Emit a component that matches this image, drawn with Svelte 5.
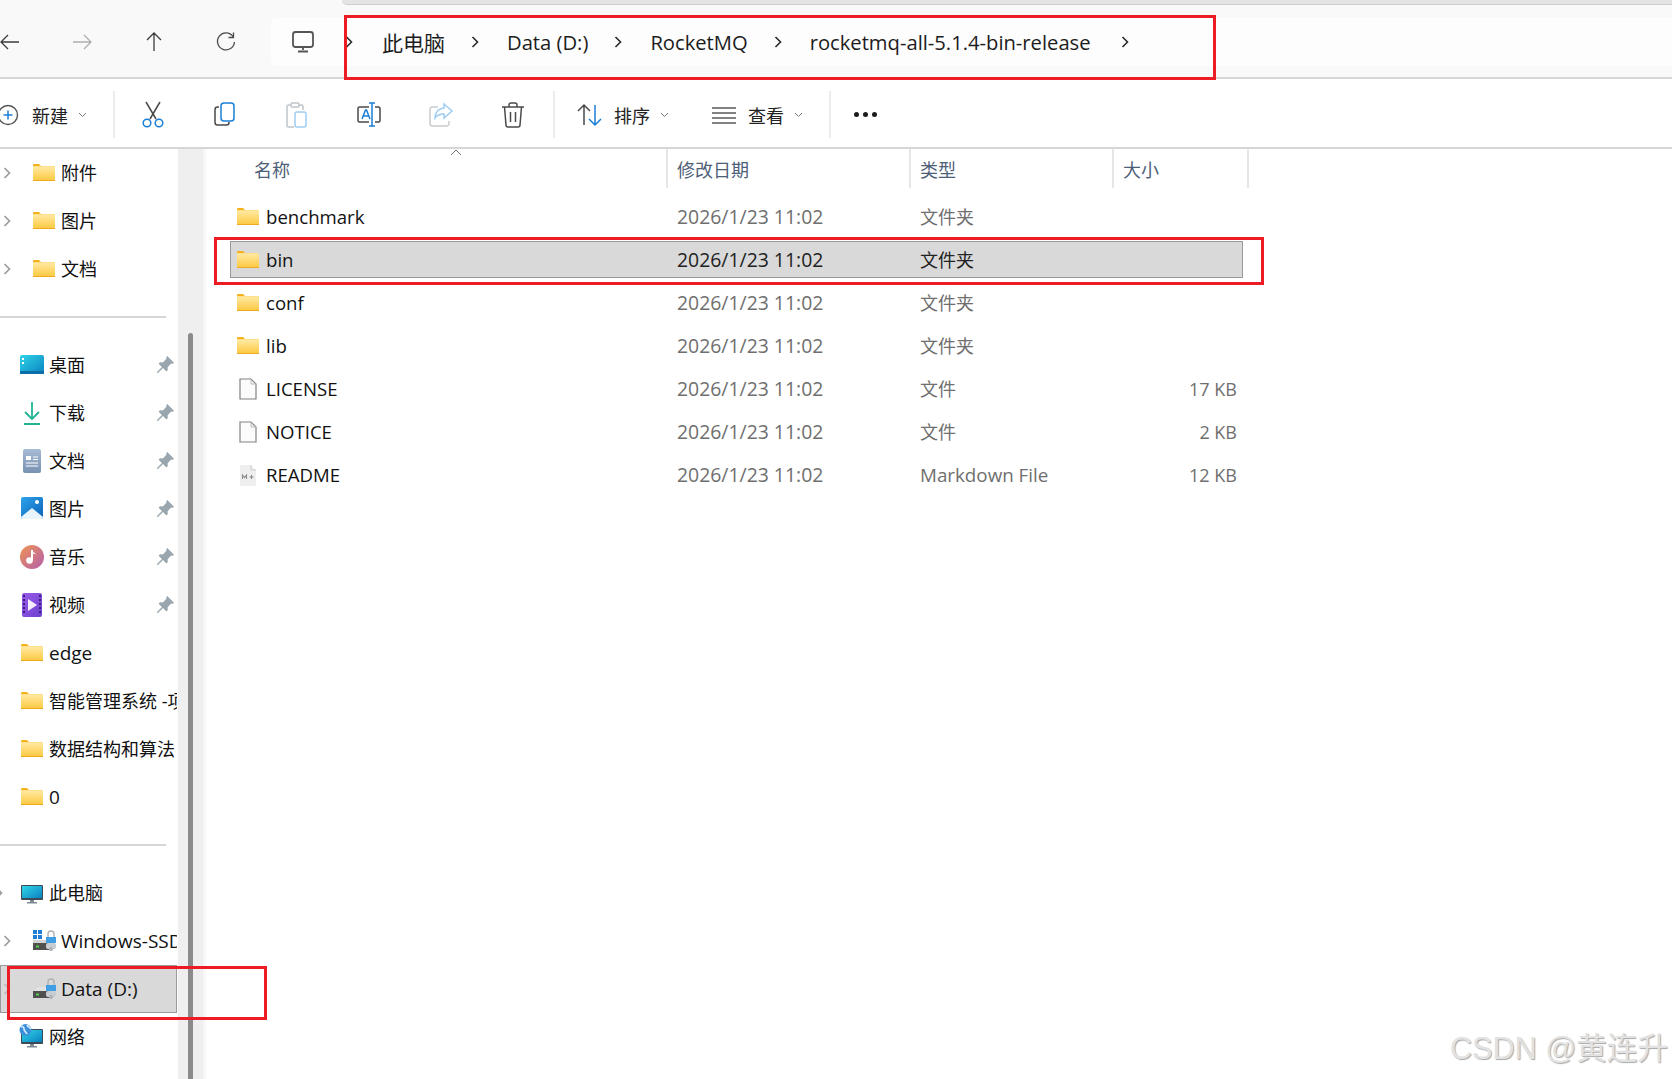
<script lang="ts">
	const pinned = [
		{ label: '桌面', icon: 'desktop' },
		{ label: '下载', icon: 'download' },
		{ label: '文档', icon: 'docs' },
		{ label: '图片', icon: 'pictures' },
		{ label: '音乐', icon: 'music' },
		{ label: '视频', icon: 'video' }
	];
	const recent = ['edge', '智能管理系统 -项目', '数据结构和算法', '0'];

	const files = [
		{ name: 'benchmark', type: '文件夹', size: '', icon: 'folder' },
		{ name: 'bin', type: '文件夹', size: '', icon: 'folder', selected: true },
		{ name: 'conf', type: '文件夹', size: '', icon: 'folder' },
		{ name: 'lib', type: '文件夹', size: '', icon: 'folder' },
		{ name: 'LICENSE', type: '文件', size: '17 KB', icon: 'file' },
		{ name: 'NOTICE', type: '文件', size: '2 KB', icon: 'file' },
		{ name: 'README', type: 'Markdown File', size: '12 KB', icon: 'md' }
	];

	// CJK glyphs sit a pixel lower than the latin font, and need their own size
	const isCjk = (s: string) => /[\u4e00-\u9fff]/.test(s);
</script>

{#snippet chevron(cls = '')}
	<svg class="chev {cls}" width="8" height="14" viewBox="0 0 8 14"><path d="M1.500 2l5 5-5 5" fill="none" stroke="currentColor" stroke-width="1.600" /></svg>
{/snippet}

{#snippet caret()}
	<svg class="caret" width="9" height="6" viewBox="0 0 9 6"><path d="M1 1l3.500 3.500L8 1" fill="none" stroke="#777" stroke-width="1" /></svg>
{/snippet}

{#snippet folder()}
	<svg width="22" height="17" viewBox="0 0 22 17">
		<path d="M0 1a1 1 0 0 1 1-1h5l2 2h14v15H0z" fill="#f5b21c" />
		<rect y="2.200" width="22" height="13.800" fill="url(#fold)" />
		<rect y="16" width="22" height="1" fill="#eeaa22" />
	</svg>
{/snippet}

{#snippet pin()}
	<svg class="pin" width="18" height="18" viewBox="0 0 16 16">
		<path d="M10 0l6 6-1.500 1-1-.3-3.200 3.200.2 2.600-1.300 1.200-3-3L1.500 15.300.7 14.500l4.600-4.700-3-3 1.200-1.300 2.600.2 3.200-3.200L9 1.500z" fill="#9aa6ae" />
	</svg>
{/snippet}

{#snippet drive(win = false)}
	<svg width="24" height="24" viewBox="0 0 24 24">
		{#if win}
			<rect x="0" y="1" width="4" height="4" fill="#1f7fd6" /><rect x="5" y="1" width="4" height="4" fill="#1f7fd6" />
			<rect x="0" y="6" width="4" height="4" fill="#1f7fd6" /><rect x="5" y="6" width="4" height="4" fill="#1f7fd6" />
			<rect x="0" y="11" width="15" height="3" fill="#d4d4d4" />
		{:else}
			<path d="M0 15l5-5h11v5z" fill="#e2e2e2" />
		{/if}
		<rect x="0" y="14" width="16" height="7" fill="#505050" />
		<rect x="3" y="16.500" width="3" height="2" fill="#4fd04f" />
		<path d="M15 8V5a3 3 0 0 1 6 0v3" fill="none" stroke="#b0b0b0" stroke-width="1.400" />
		<rect x="13" y="8" width="10" height="6" fill="#3f9fe2" />
		<rect x="13" y="14" width="10" height="6" rx="2" fill="#c8cdd2" />
		<circle cx="18" cy="20" r="2" fill="#aab0b6" />
	</svg>
{/snippet}

{#snippet monitor(net = false)}
	<svg width="26" height="25" viewBox="0 0 26 25">
		<rect x="2" y="5" width="22" height="15" rx="1" fill="#3c4b55" />
		<rect x="3" y="6" width="20" height="12" fill="url(#desk)" />
		<rect x="11" y="20" width="4" height="2" fill="#7e8a92" /><rect x="8" y="22" width="10" height="1.500" fill="#7e8a92" />
		{#if net}
			<circle cx="6.500" cy="6" r="6" fill="#3b8fd8" />
			<path d="M2 3c2-1 3 0 3 2s2 3 3 5M8 1c1 2 3 2 4 4" fill="none" stroke="#cfe8fb" stroke-width="1.800" />
		{/if}
	</svg>
{/snippet}

{#snippet navIcon(name)}
	<svg class="sym" width="24" height="24" viewBox="0 0 24 24" fill="none" stroke-width="1.300">
		{#if name === 'back'}
			<path d="M21 12H3M10 5l-7 7 7 7" stroke="#3c3c3c" />
		{:else if name === 'forward'}
			<path d="M3 12h18M14 5l7 7-7 7" stroke="#aeaeae" />
		{:else if name === 'up'}
			<path d="M12 21V3M5 10l7-7 7 7" stroke="#3c3c3c" />
		{:else}
			<path d="M19 6.500A8.500 8.500 0 1 0 20.500 12M19.500 2.500v5h-5" stroke="#4c4c4c" />
		{/if}
	</svg>
{/snippet}

{#snippet toolIcon(name)}
	<svg class="sym" width="26" height="28" viewBox="0 0 26 28" fill="none" stroke-width="1.500">
		{#if name === 'cut'}
			<path d="M6 1l10 17M20 1L10 18" stroke="#4a4a4a" />
			<circle cx="7" cy="22" r="3.800" stroke="#1a7fd4" /><circle cx="19" cy="22" r="3.800" stroke="#1a7fd4" />
		{:else if name === 'copy'}
			<path d="M7 6H5.500A2.500 2.500 0 0 0 3 8.500v13A2.500 2.500 0 0 0 5.500 24h9a2.500 2.500 0 0 0 2.500-2.500V21" stroke="#4a4a4a" />
			<rect x="9" y="2" width="13" height="18" rx="3" stroke="#1a7fd4" />
		{:else if name === 'paste'}
			<path d="M7 4H4.500A1.500 1.500 0 0 0 3 5.500v19A1.500 1.500 0 0 0 4.500 26H10M19 9V5.500A1.500 1.500 0 0 0 17.500 4H15" stroke="#bfc5ca" />
			<rect x="7" y="2" width="8" height="4" rx="1" stroke="#bfc5ca" />
			<rect x="11" y="11" width="11" height="15" rx="2" stroke="#9fcdf2" />
		{:else if name === 'rename'}
			<path d="M13 6H3.500A1.500 1.500 0 0 0 2 7.500v12A1.500 1.500 0 0 0 3.500 21H13M19 6h3.500A1.500 1.500 0 0 1 24 7.500v12a1.500 1.500 0 0 1-1.500 1.500H19" stroke="#4a4a4a" />
			<path d="M6 18l3.500-9h1l3.500 9M7.500 15h5" stroke="#1a7fd4" />
			<path d="M13 2h6M16 2v23M13 25h6" stroke="#1a7fd4" />
		{:else if name === 'share'}
			<path d="M10 6H4.500A2.500 2.500 0 0 0 2 8.500v14A2.500 2.500 0 0 0 4.500 25h14a2.500 2.500 0 0 0 2.500-2.500V20" stroke="#c8cdd1" />
			<path d="M16 3l8 7-8 7v-4c-4 0-7 1-9 4 0-6 4-10 9-10z" stroke="#9fcdf2" />
		{:else if name === 'trash'}
			<path d="M2 6h22M9 6V4a2 2 0 0 1 2-2h4a2 2 0 0 1 2 2v2M4.500 6l1.500 18a2 2 0 0 0 2 2h10a2 2 0 0 0 2-2l1.500-18M10.500 11v10M15.500 11v10" stroke="#4a4a4a" />
		{:else if name === 'sort'}
			<path d="M7 24V4M1 10l6-6 6 6" stroke="#4a4a4a" />
			<path d="M18 4v20M12 18l6 6 6-6" stroke="#1a7fd4" />
		{:else if name === 'view'}
			<path d="M1 7h24M1 12h24M1 17h24M1 22h24" stroke="#5a5a5a" />
		{/if}
	</svg>
{/snippet}

{#snippet placeIcon(name)}
	<span class="place">
		{#if name === 'desktop'}
			<svg width="24" height="19" viewBox="0 0 24 19">
				<rect width="24" height="19" rx="2" fill="url(#desk)" />
				<rect x="2" y="3" width="2" height="2" fill="#fff" /><rect x="2" y="7" width="2" height="2" fill="#fff" />
				<rect y="16" width="24" height="3" fill="#0b6ea8" />
			</svg>
		{:else if name === 'download'}
			<svg width="24" height="24" viewBox="0 0 24 24" fill="none" stroke="#1fb595" stroke-width="1.800">
				<path d="M12 1v17M5 11l7 7 7-7" /><path d="M4 23h16" stroke-width="2" />
			</svg>
		{:else if name === 'docs'}
			<svg width="24" height="24" viewBox="0 0 24 24">
				<rect x="3" width="18" height="24" rx="2" fill="url(#doc)" />
				<path d="M6 7h5v4H6z" fill="#fff" /><path d="M13 8h5M13 10.500h5M6 14h12M6 17h12" stroke="#fff" stroke-width="1" />
			</svg>
		{:else if name === 'pictures'}
			<svg width="24" height="23" viewBox="0 0 24 23">
				<rect x="1" width="22" height="22" rx="2" fill="url(#pic)" />
				<path d="M1 20l11-9 11 9v0a2 2 0 0 1-2 2H3a2 2 0 0 1-2-2z" fill="#eaf4fc" />
				<circle cx="17" cy="5" r="2" fill="#fff" />
			</svg>
		{:else if name === 'music'}
			<svg width="24" height="24" viewBox="0 0 24 24">
				<circle cx="12" cy="12" r="12" fill="url(#mus)" />
				<path d="M12 5v10" stroke="#fff" stroke-width="2" /><circle cx="9.500" cy="15.500" r="3.300" fill="#fff" />
				<path d="M12 5c1 2.500 3 2.500 4 4.500-1.500-.8-3-1-4-1z" fill="#fff" />
			</svg>
		{:else if name === 'video'}
			<svg width="24" height="24" viewBox="0 0 24 24">
				<rect x="2" width="20" height="24" rx="2" fill="url(#vid)" />
				<path d="M3 3h2M3 7h2M3 11h2M3 15h2M3 19h2M19 3h2M19 7h2M19 11h2M19 15h2M19 19h2" stroke="#3a1f7a" stroke-width="2" />
				<path d="M8 6l9 6-9 6z" fill="#f4eefe" />
			</svg>
		{:else if name === 'folder'}
			{@render folder()}
		{/if}
	</span>
{/snippet}

<svg class="defs" width="0" height="0">
	<defs>
		<linearGradient id="fold" x1="0" y1="0" x2="0" y2="1"><stop offset="0" stop-color="#ffeba6" /><stop offset="1" stop-color="#fdca45" /></linearGradient>
		<linearGradient id="desk" x1="0" y1="0" x2="1" y2="1"><stop offset="0" stop-color="#30d4e8" /><stop offset="1" stop-color="#0a82c0" /></linearGradient>
		<linearGradient id="doc" x1="0" y1="0" x2="0" y2="1"><stop offset="0" stop-color="#a7bbd4" /><stop offset="1" stop-color="#7892b3" /></linearGradient>
		<linearGradient id="pic" x1="0" y1="0" x2="1" y2="1"><stop offset="0" stop-color="#2ea3ea" /><stop offset="1" stop-color="#0b62b8" /></linearGradient>
		<linearGradient id="mus" x1="0" y1="0" x2="1" y2="1"><stop offset="0" stop-color="#f09352" /><stop offset="1" stop-color="#b25fae" /></linearGradient>
		<linearGradient id="vid" x1="0" y1="0" x2="1" y2="1"><stop offset="0" stop-color="#9a5ce8" /><stop offset="1" stop-color="#6d3fd0" /></linearGradient>
	</defs>
</svg>

<div class="window">
	<div class="tab-edge"></div>

	<header class="topbar">
		<nav class="nav">
			{#each ['back', 'forward', 'up', 'refresh'] as name}
				<span class="nav-slot">{@render navIcon(name)}</span>
			{/each}
		</nav>
		<div class="address">
			<svg class="pc" width="24" height="24" viewBox="0 0 24 24" fill="none" stroke="#555" stroke-width="1.800">
				<rect x="2" y="2" width="20" height="15" rx="2.500" /><path d="M12 17v3M7 21.500h10" />
			</svg>
			{@render chevron('first')}
			<span class="crumb big">此电脑</span>
			{@render chevron()}
			<span class="crumb">Data (D:)</span>
			{@render chevron()}
			<span class="crumb">RocketMQ</span>
			{@render chevron()}
			<span class="crumb">rocketmq-all-5.1.4-bin-release</span>
			{@render chevron('last')}
		</div>
	</header>

	<div class="toolbar">
		<div class="tool-new">
			<svg class="plus" width="19" height="24" viewBox="2 0 19 24" fill="none">
				<circle cx="10" cy="12" r="9.500" stroke="#555" stroke-width="1.400" />
				<path d="M10 7.500v9M5.500 12h9" stroke="#1a7fd4" stroke-width="1.500" />
			</svg>
			<span class="tool-label">新建</span>
			{@render caret()}
		</div>
		<span class="vsep"></span>
		{#each ['cut', 'copy', 'paste', 'rename', 'share', 'trash'] as name}
			<span class="tool-slot">{@render toolIcon(name)}</span>
		{/each}
		<span class="vsep mid"></span>
		<div class="tool-menu sort">
			{@render toolIcon('sort')}
			<span class="tool-label">排序</span>
			{@render caret()}
		</div>
		<div class="tool-menu view">
			{@render toolIcon('view')}
			<span class="tool-label">查看</span>
			{@render caret()}
		</div>
		<span class="vsep"></span>
		<span class="dots"><i></i><i></i><i></i></span>
	</div>

	<main class="main">
		<aside class="sidebar">
			{#each ['附件', '图片', '文档'] as label}
				<div class="side-row sub">
					<span class="exp">{@render chevron()}</span>
					<span class="place">{@render folder()}</span>
					<span class="side-text cjk">{label}</span>
				</div>
			{/each}
			<hr class="side-sep" />
			{#each pinned as item}
				<div class="side-row">
					{@render placeIcon(item.icon)}
					<span class="side-text cjk">{item.label}</span>
					{@render pin()}
				</div>
			{/each}
			{#each recent as label}
				<div class="side-row">
					{@render placeIcon('folder')}
					<span class="side-text" class:cjk={isCjk(label)}>{label}</span>
				</div>
			{/each}
			<hr class="side-sep" />
			<div class="side-row">
				<span class="exp cut">{@render chevron()}</span>
				<span class="place">{@render monitor()}</span>
				<span class="side-text cjk">此电脑</span>
			</div>
			<div class="side-row sub">
				<span class="exp">{@render chevron()}</span>
				<span class="place">{@render drive(true)}</span>
				<span class="side-text">Windows-SSD (C:)</span>
			</div>
			<div class="side-row sub active">
				<span class="exp faint">{@render chevron()}</span>
				<span class="place">{@render drive()}</span>
				<span class="side-text">Data (D:)</span>
			</div>
			<div class="side-row">
				<span class="place">{@render monitor(true)}</span>
				<span class="side-text cjk">网络</span>
			</div>
		</aside>

		<div class="gutter"><div class="thumb"></div></div>

		<section class="content">
			<div class="head">
				<div class="head-cell first">
					名称
					<svg class="sort-caret" width="12" height="7" viewBox="0 0 12 7"><path d="M1 6l5-5 5 5" fill="none" stroke="#777" stroke-width="1" /></svg>
				</div>
				<div class="head-cell">修改日期</div>
				<div class="head-cell">类型</div>
				<div class="head-cell">大小</div>
			</div>
			<div class="list">
				{#each files as file}
					<div class="row" class:selected={file.selected}>
						<div class="name">
							<span class="file-icon">
								{#if file.icon === 'folder'}
									{@render folder()}
								{:else if file.icon === 'file'}
									<svg width="18" height="22" viewBox="0 0 18 22"><path d="M1 1h11l5 5v15H1z" fill="#fbfbfb" stroke="#808080" stroke-width="1.200" /><path d="M12 1v5h5" fill="none" stroke="#bbb" /></svg>
								{:else}
									<svg width="18" height="22" viewBox="0 0 18 22"><path d="M1 1h11l5 5v15a1 1 0 0 1-1 1H2a1 1 0 0 1-1-1z" fill="#efefef" /><path d="M12 1v5h5" fill="none" stroke="#ccc" /><path d="M3.500 15v-4l2 2.500 2-2.500v4M12.500 11v4M10.500 13h4" fill="none" stroke="#888" stroke-width="1.100" /></svg>
								{/if}
							</span>
							{file.name}
						</div>
						<div class="meta date">2026/1/23 11:02</div>
						<div class="meta type" class:cjk={isCjk(file.type)}>{file.type}</div>
						<div class="meta size">{file.size}</div>
					</div>
				{/each}
			</div>
		</section>
	</main>

	<div class="mark mark-path"></div>
	<div class="mark mark-row"></div>
	<div class="mark mark-drive"></div>
	<div class="watermark">CSDN @黄连升</div>
</div>

<style>
	:global(body) {
		margin: 0;
		background: #fff;
	}

	.defs {
		position: absolute;
	}

	.window {
		position: relative;
		width: 1672px;
		height: 1079px;
		overflow: hidden;
		font-family: 'Open Sans', 'Noto Sans CJK SC', sans-serif;
		font-size: 18px;
		color: #111;
	}

	.tab-edge {
		position: absolute;
		left: 342px;
		right: 0;
		top: 0;
		height: 4px;
		background: #e4e4e4;
		border-bottom: 1px solid #d0d0d0;
		border-bottom-left-radius: 5px;
	}

	svg {
		display: block;
		flex: none;
	}

	.topbar {
		display: flex;
		align-items: flex-start;
		height: 77px;
		background: #f9f9f9;
		border-bottom: 2px solid #d6d6d6;
	}

	.nav {
		display: flex;
		margin-left: -26px;
		padding-top: 30px;
	}

	.nav-slot {
		display: flex;
		justify-content: center;
		width: 72px;
	}

	.address {
		display: flex;
		align-items: center;
		flex: 1;
		height: 48px;
		margin: 18px 0 0 9px;
		padding-left: 20px;
		background: #fdfdfd;
		border-radius: 6px 0 0 6px;
		font-size: 20.200px;
		color: #1c1c1c;
	}

	.crumb.big {
		font-size: 21px;
	}

	.chev {
		color: #2a2a2a;
		margin: 0 28px 0 26px;
	}

	.chev.first {
		margin: 0 29px 0 30px;
	}

	.chev.last {
		margin-left: 30px;
	}

	.toolbar {
		display: flex;
		align-items: center;
		box-sizing: border-box;
		height: 70px;
		padding-top: 3px;
		border-bottom: 2px solid #d6d6d6;
	}

	.tool-new {
		display: flex;
		align-items: center;
		width: 113px;
	}

	.plus {
		margin-right: 13px;
	}

	.tool-label {
		font-size: 18px;
		color: #222;
	}

	.caret {
		margin-left: 10px;
	}

	.vsep {
		width: 2px;
		height: 47px;
		background: #ececec;
		margin-right: 2px;
	}

	.vsep.mid {
		margin-left: 4px;
	}

	.tool-slot {
		display: flex;
		justify-content: center;
		width: 72px;
	}

	.tool-menu {
		display: flex;
		align-items: center;
	}

	.tool-menu .tool-label {
		margin-left: 11px;
	}

	.sort {
		width: 109px;
		margin-left: 20px;
	}

	.view {
		box-sizing: border-box;
		width: 143px;
		padding-left: 25px;
	}

	.dots {
		display: flex;
		gap: 4px;
		margin-left: 21px;
	}

	.dots i {
		width: 5px;
		height: 5px;
		border-radius: 50%;
		background: #1c1c1c;
	}

	.main {
		display: flex;
		height: 930px;
		overflow: hidden;
	}

	.sidebar {
		width: 178px;
		flex: none;
		overflow: hidden;
	}

	.side-row {
		position: relative;
		display: flex;
		align-items: center;
		box-sizing: border-box;
		width: 177px;
		height: 48px;
		padding-left: 20px;
		overflow: hidden;
		white-space: nowrap;
	}

	.side-row.sub {
		padding-left: 3px;
	}

	.side-row.active {
		background: #d9d9d9;
		outline: 1px solid #9a9a9a;
		outline-offset: -1px;
	}

	.exp {
		width: 8px;
		margin-right: 22px;
		color: #999;
	}

	.exp :global(.chev) {
		margin: 0;
		color: #999;
	}

	.exp.faint {
		opacity: 0.5;
	}

	.exp.cut {
		position: absolute;
		left: -5px;
		margin: 0;
	}

	.place {
		display: flex;
		justify-content: center;
		width: 24px;
		flex: none;
		padding-bottom: 1px;
	}

	.sub .place {
		justify-content: flex-start;
	}

	.side-text {
		margin-left: 5px;
		flex: 1;
		min-width: 0;
		overflow: hidden;
		font-size: 19px;
	}

	.side-text.cjk {
		font-size: 18px;
		padding-bottom: 2px;
	}

	.sub .side-text {
		margin-left: 4px;
	}

	.pin {
		margin-right: 3px;
	}

	.side-sep {
		width: 166px;
		height: 2px;
		margin: 23px 0;
		border: 0;
		background: #d6d6d6;
	}

	.gutter {
		width: 25px;
		flex: none;
		background: #efefef;
		border-right: 3px solid #f7f7f7;
	}

	.thumb {
		width: 5px;
		height: 800px;
		margin: 184px 0 0 10px;
		background: #8a8a8a;
		border-radius: 3px 3px 0 0;
	}

	.content {
		flex: 1;
		min-width: 0;
	}

	.head {
		display: grid;
		grid-template-columns: 462px 243px 203px 135px;
		height: 39px;
		margin-bottom: 10px;
		color: #4d6078;
	}

	.head-cell {
		position: relative;
		box-sizing: border-box;
		padding: 7px 0 0 9px;
		border-right: 2px solid #e6e6e6;
	}

	.head-cell.first {
		padding-left: 48px;
	}

	.sort-caret {
		position: absolute;
		left: 244px;
		top: 0;
	}

	.list {
		padding-left: 24px;
	}

	.row {
		display: grid;
		grid-template-columns: 446px 243px 193px 129px;
		align-items: center;
		box-sizing: border-box;
		width: 1013px;
		height: 37px;
		margin-bottom: 6px;
		border: 1px solid transparent;
	}

	.row.selected {
		background: #d9d9d9;
		border-color: #999;
	}

	.name {
		display: flex;
		align-items: center;
		font-size: 18.600px;
		color: #111;
	}

	.file-icon {
		display: flex;
		justify-content: center;
		width: 22px;
		margin: 0 7px 0 6px;
	}

	.meta {
		color: #6f6f6f;
	}

	.date {
		font-size: 19.400px;
	}

	.type {
		font-size: 18.800px;
	}

	.type.cjk {
		font-size: 18px;
		padding-bottom: 2px;
	}

	.selected .meta {
		color: #222;
	}

	.size {
		text-align: right;
		padding-right: 5px;
	}

	.mark {
		position: absolute;
		box-sizing: border-box;
		border: 3px solid #ed1c24;
	}

	.mark-path {
		left: 344px;
		top: 15px;
		width: 872px;
		height: 65px;
	}

	.mark-row {
		left: 214px;
		top: 237px;
		width: 1050px;
		height: 48px;
	}

	.mark-drive {
		left: 7px;
		top: 966px;
		width: 260px;
		height: 54px;
	}

	.watermark {
		position: absolute;
		right: 4px;
		top: 1024px;
		font-family: 'Liberation Sans', 'Noto Sans CJK SC', sans-serif;
		font-size: 30.600px;
		color: #e2e2e2;
		text-shadow: 1px 1px 1px #a8a8a8;
	}
</style>
